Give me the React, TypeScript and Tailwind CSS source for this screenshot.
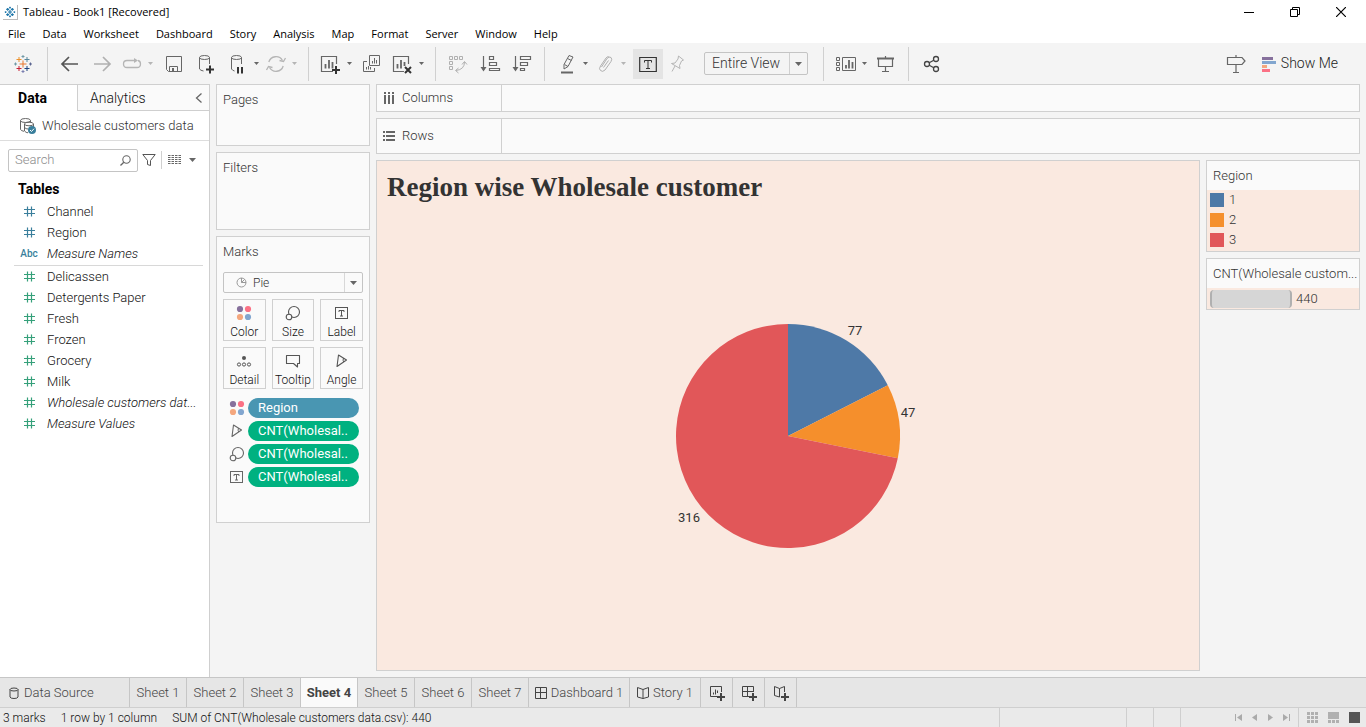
import type { ReactNode } from "react";

type IconProps = { children: ReactNode; size?: number; className?: string };

function Icon({ children, size = 24, className = "" }: IconProps) {
  return (
    <svg
      width={size}
      height={size}
      viewBox={`0 0 ${size} ${size}`}
      fill="none"
      stroke="currentColor"
      aria-hidden="true"
      className={`shrink-0 ${className}`}
    >
      {children}
    </svg>
  );
}

function Tool({ label, children, className = "text-[#666]" }: { label: string; children: ReactNode; className?: string }) {
  return (
    <button type="button" aria-label={label} className={`flex shrink-0 items-center justify-center ${className}`}>
      <Icon>{children}</Icon>
    </button>
  );
}

function Caret({ label, className = "text-[#666]" }: { label: string; className?: string }) {
  return (
    <button type="button" aria-label={label} className={`flex h-6 w-3 shrink-0 items-center justify-center ${className}`}>
      <svg width="5" height="3" viewBox="0 0 5 3" aria-hidden="true">
        <path d="M0 0H5L2.5 3Z" fill="currentColor" />
      </svg>
    </button>
  );
}

function Separator() {
  return <div className="mx-2.5 h-[34px] w-px shrink-0 bg-[#d0d0d0]" />;
}

function plus(x: number, y: number, r: number) {
  return `M${x - r} ${y}H${x + r}M${x} ${y - r}V${y + r}`;
}

function Sparkle({ mono = false }: { mono?: boolean }) {
  const c = (color: string) => (mono ? "#1f77aa" : color);
  const w = mono ? 2 : 1;
  return (
    <>
      <path d={plus(12, 12, 3.5)} stroke={c("#e8762d")} strokeWidth={w} />
      <path d={plus(8, 7.5, 2.5)} stroke={c("#eb912c")} strokeWidth={w} />
      <path d={plus(16, 7.5, 2.5)} stroke={c("#59879b")} strokeWidth={w} />
      <path d={plus(8, 16.5, 2.5)} stroke={c("#c72035")} strokeWidth={w} />
      <path d={plus(16, 16.5, 2.5)} stroke={c("#1f447e")} strokeWidth={w} />
      <path d={plus(12, 4.5, 1.5)} stroke={c("#7099a6")} strokeWidth={w} />
      <path d={plus(12, 19.5, 1.5)} stroke={c("#7b7fb0")} strokeWidth={w} />
      <path d={plus(4.5, 12, 1.5)} stroke={c("#7099a6")} strokeWidth={w} />
      <path d={plus(19.5, 12, 1.5)} stroke={c("#5b6591")} strokeWidth={w} />
    </>
  );
}

function LetterBox({ size = 14 }: { size?: number }) {
  return (
    <svg width={size} height={size} viewBox="0 0 14 14" fill="none" stroke="currentColor" aria-hidden="true" className="shrink-0">
      <rect x="0.5" y="1.5" width="12" height="11" />
      <path d="M4 6V4.5H9V6M6.5 4.5V10M5 10H8" />
    </svg>
  );
}

function ColorDots() {
  return (
    <svg width="16" height="16" viewBox="0 0 16 16" aria-hidden="true" className="shrink-0">
      <circle cx="4" cy="4" r="3.1" fill="#86709c" />
      <circle cx="12" cy="4" r="3.1" fill="#fb7185" />
      <circle cx="4" cy="12" r="3.1" fill="#f4a77e" />
      <circle cx="12" cy="12" r="3.1" fill="#82a6cf" />
    </svg>
  );
}

function SizeIcon() {
  return (
    <Icon size={16}>
      <circle cx="9" cy="7" r="5.5" strokeWidth="1.1" />
      <circle cx="4" cy="12" r="2.8" fill="#fafafa" strokeWidth="1.1" />
    </Icon>
  );
}

function AngleIcon() {
  return (
    <Icon size={16}>
      <path d="M4.5 2L12.5 7L3 13.5Z" strokeLinejoin="round" strokeWidth="1.1" />
      <path d="M9.5 5Q8.500 7.500 9.800 9" />
    </Icon>
  );
}

function DetailIcon() {
  return (
    <Icon size={16}>
      <circle cx="8" cy="5" r="2" fill="currentColor" stroke="none" />
      <circle cx="3" cy="11.5" r="1.6" />
      <circle cx="8" cy="11.5" r="1.6" />
      <circle cx="13" cy="11.5" r="1.6" />
    </Icon>
  );
}

function TooltipIcon() {
  return (
    <Icon size={16}>
      <path d="M1.5 2.5H14.5V10.5H12.5V14L8.5 10.5H1.5Z" strokeLinejoin="round" strokeWidth="1.1" />
    </Icon>
  );
}

function HashIcon({ className }: { className: string }) {
  return (
    <svg width="11" height="11" viewBox="0 0 11 11" fill="none" stroke="currentColor" strokeWidth="1.2" aria-hidden="true" className={className}>
      <path d="M3.5 0.5V10.5M7.5 0.5V10.5M0 3.5H11M0 7.5H11" />
    </svg>
  );
}

type Field = { name: string; kind: "dimension" | "text" | "measure"; italic?: boolean };

const dimensions: Field[] = [
  { name: "Channel", kind: "dimension" },
  { name: "Region", kind: "dimension" },
  { name: "Measure Names", kind: "text", italic: true },
];

const measures: Field[] = [
  { name: "Delicassen", kind: "measure" },
  { name: "Detergents Paper", kind: "measure" },
  { name: "Fresh", kind: "measure" },
  { name: "Frozen", kind: "measure" },
  { name: "Grocery", kind: "measure" },
  { name: "Milk", kind: "measure" },
  { name: "Wholesale customers dat...", kind: "measure", italic: true },
  { name: "Measure Values", kind: "measure", italic: true },
];

function FieldRow({ field }: { field: Field }) {
  return (
    <li className="flex h-[21px] items-center">
      <span className="flex w-[47px] shrink-0 justify-center pl-[11px]">
        {field.kind === "text" ? (
          <span className="text-[10px] font-medium text-[#3a7f9c]">Abc</span>
        ) : (
          <HashIcon className={field.kind === "dimension" ? "text-[#3a7f9c]" : "text-[#35a07a]"} />
        )}
      </span>
      <span className={field.italic ? "italic" : ""}>{field.name}</span>
    </li>
  );
}

function DataPane() {
  return (
    <aside className="flex w-[210px] shrink-0 flex-col border-t border-r border-[#cfcfcf] bg-white text-[#111]">
      <div className="flex h-[26px] text-sm">
        <button type="button" className="w-[77px] pr-3 text-center font-bold text-black">Data</button>
        <div className="flex flex-1 items-center justify-between border-b border-l border-[#cfcfcf] bg-[#fafafa] pr-1.5 pl-3">
          <button type="button">Analytics</button>
          <button type="button" aria-label="Collapse pane" className="text-[#666]">
            <svg width="8" height="10" viewBox="0 0 8 10" fill="none" stroke="currentColor" strokeWidth="1.3" aria-hidden="true">
              <path d="M6.5 0.5L1.5 5L6.5 9.5" />
            </svg>
          </button>
        </div>
      </div>
      <div className="flex h-[30px] items-center gap-1.5 border-b border-[#ddd] pl-5 text-[13px] text-[#333]">
        <Icon size={16} className="text-[#666]">
          <ellipse cx="5.5" cy="2.5" rx="5" ry="2" />
          <path d="M0.5 2.5V11.5Q1.5 13 4 13.3M10.5 2.5V4" />
          <ellipse cx="9" cy="6" rx="4.5" ry="1.8" />
          <path d="M4.500 6V13Q6 14.800 8 14.800M13.500 6V9M4.500 9.500Q6 11 8 11" />
          <circle cx="12" cy="12" r="4" fill="#3a7f9c" stroke="none" />
          <path d="M10 12L11.500 13.500L14 10.700" stroke="white" />
        </Icon>
        <span>Wholesale customers data</span>
      </div>
      <div className="flex h-[38px] items-center pl-2">
        <div className="flex h-[23px] w-[130px] items-center rounded-[2px] border border-[#c4c4c4] pr-1.5 pl-1.5">
          <input
            type="text"
            aria-label="Search"
            placeholder="Search"
            className="w-full min-w-0 flex-1 text-[13px] outline-none placeholder:text-[#8c8c8c]"
          />
          <Icon size={11} className="text-[#666]">
            <circle cx="6.500" cy="4.500" r="3.700" strokeWidth="1.100" />
            <path d="M3.800 7.200L0.500 10.500" strokeWidth="1.300" />
          </Icon>
        </div>
        <button type="button" aria-label="Filter fields" className="ml-1 text-[#555]">
          <Icon size={14}>
            <path d="M0.800 1.500H13.200L8.500 7.500V12.500L5.500 11.500V7.500Z" strokeLinejoin="round" />
          </Icon>
        </button>
        <div className="mr-1.5 ml-[5px] h-[18px] w-px bg-[#d0d0d0]" />
        <button type="button" aria-label="View options" className="flex items-center gap-2 text-[#666]">
          <svg width="13" height="10" viewBox="0 0 13 10" fill="none" stroke="currentColor" aria-hidden="true">
            <path d="M0 0.500H13M0 2.500H13M0 4.500H13M0 6.500H13M0 8.500H13" strokeDasharray="2.500 1" />
          </svg>
          <svg width="7" height="4" viewBox="0 0 7 4" aria-hidden="true">
            <path d="M0 0H7L3.500 4Z" fill="currentColor" />
          </svg>
        </button>
      </div>
      <h2 className="h-[22px] pl-[18px] text-[14px] leading-5 font-bold text-black">Tables</h2>
      <ul className="text-[13px]">
        {dimensions.map((f) => (
          <FieldRow key={f.name} field={f} />
        ))}
      </ul>
      <div className="mt-px mr-1.5 ml-3.5 h-px bg-[#d8d8d8]" />
      <ul className="text-[13px]">
        {measures.map((f) => (
          <FieldRow key={f.name} field={f} />
        ))}
      </ul>
    </aside>
  );
}

const markButtons: { label: string; icon: ReactNode }[] = [
  { label: "Color", icon: <ColorDots /> },
  { label: "Size", icon: <SizeIcon /> },
  { label: "Label", icon: <LetterBox /> },
  { label: "Detail", icon: <DetailIcon /> },
  { label: "Tooltip", icon: <TooltipIcon /> },
  { label: "Angle", icon: <AngleIcon /> },
];

const pills = [
  { key: "color", text: "Region", icon: <ColorDots />, tone: "bg-[#4996b2]" },
  { key: "angle", text: "CNT(Wholesal..", icon: <AngleIcon />, tone: "bg-[#00b180]" },
  { key: "size", text: "CNT(Wholesal..", icon: <SizeIcon />, tone: "bg-[#00b180]" },
  { key: "label", text: "CNT(Wholesal..", icon: <LetterBox />, tone: "bg-[#00b180]" },
];

function Cards() {
  return (
    <div className="flex w-[154px] shrink-0 flex-col gap-1.5 text-[13px] text-[#333]">
      <section className="h-[62px] border border-[#d0d0d0] bg-[#fafafa] px-1.5 py-[5px]">
        <h2 className="leading-5">Pages</h2>
      </section>
      <section className="h-[78px] border border-[#d0d0d0] bg-[#fafafa] px-1.5 py-[5px]">
        <h2 className="leading-5">Filters</h2>
      </section>
      <section className="border border-[#d0d0d0] bg-[#fafafa] px-1.5 pt-[5px] pb-[35px]">
        <h2 className="leading-5">Marks</h2>
        <div className="relative mt-2.5 flex h-[21px] items-center rounded-[2px] border border-[#c4c4c4]">
          <select
            aria-label="Mark type"
            defaultValue="Pie"
            className="h-full w-full appearance-none bg-transparent pl-[29px] text-xs outline-none"
          >
            <option>Pie</option>
            <option>Bar</option>
            <option>Line</option>
          </select>
          <div className="pointer-events-none absolute inset-y-0 left-3 flex items-center text-[#999]">
            <Icon size={11}>
              <circle cx="5.500" cy="5.500" r="4.500" />
              <path d="M5.500 1V5.500H10M5.500 5.500L8.700 2.300" />
            </Icon>
          </div>
          <div className="pointer-events-none absolute inset-y-0 right-0 flex w-[18px] items-center justify-center border-l border-[#d8d8d8] text-[#666]">
            <svg width="7" height="4" viewBox="0 0 7 4" aria-hidden="true">
              <path d="M0 0H7L3.500 4Z" fill="currentColor" />
            </svg>
          </div>
        </div>
        <div className="mt-1.5 grid grid-cols-3 gap-1.5">
          {markButtons.map((b) => (
            <button
              key={b.label}
              type="button"
              className="flex h-[42px] flex-col items-center border border-[#d0d0d0] pt-[5px] text-[#555]"
            >
              <span className="flex h-4 items-center">{b.icon}</span>
              <span className="mt-[3px] text-[12px] leading-4 whitespace-nowrap text-[#111]">{b.label}</span>
            </button>
          ))}
        </div>
        <ul className="mt-[9px] flex flex-col gap-[3px]">
          {pills.map((p) => (
            <li key={p.key} className="flex h-5 items-center pr-1 text-[#666]">
              <span className="flex w-[25px] shrink-0 items-center justify-center pl-0.5">{p.icon}</span>
              <button type="button" className={`h-5 flex-1 rounded-full pl-2.5 text-left text-[13px] leading-5 font-normal text-white ${p.tone}`}>
                {p.text}
              </button>
            </li>
          ))}
        </ul>
      </section>
    </div>
  );
}

const slices = [
  { region: "1", value: 77, color: "#4e79a7", swatch: "bg-[#4e79a7]", x: 197, y: 17 },
  { region: "2", value: 47, color: "#f58f2c", swatch: "bg-[#f58f2c]", x: 250, y: 99 },
  { region: "3", value: 316, color: "#e15759", swatch: "bg-[#e15759]", x: 31, y: 204 },
];

function PieChart() {
  const cx = 130;
  const cy = 118;
  const r = 112;
  const total = slices.reduce((sum, s) => sum + s.value, 0);
  let start = 0;
  const point = (a: number) => `${cx + r * Math.sin(a)} ${cy - r * Math.cos(a)}`;
  return (
    <svg width="260" height="236" viewBox="0 0 260 236" role="img" aria-label="Wholesale customers by region" className="overflow-visible">
      {slices.map((s) => {
        const end = start + (s.value / total) * Math.PI * 2;
        const large = end - start > Math.PI ? 1 : 0;
        const d = `M${cx} ${cy}L${point(start)}A${r} ${r} 0 ${large} 1 ${point(end)}Z`;
        start = end;
        return <path key={s.region} d={d} fill={s.color} />;
      })}
      {slices.map((s) => (
        <text key={s.region} x={s.x} y={s.y} textAnchor="middle" fill="#333" className="text-[13px] font-normal">
          {s.value}
        </text>
      ))}
    </svg>
  );
}

function Shelf({ name, icon, height }: { name: string; icon: ReactNode; height: string }) {
  return (
    <section className={`flex shrink-0 border border-[#d0d0d0] bg-[#fafafa] ${height}`}>
      <div className="flex w-[125px] items-center gap-[7px] border-r border-[#d0d0d0] pl-1.5 text-[13px] text-[#333]">
        {icon}
        <h2>{name}</h2>
      </div>
    </section>
  );
}

function Worksheet() {
  return (
    <main className="flex min-w-0 flex-1 flex-col gap-1.5 pb-1.5">
      <Shelf
        name="Columns"
        height="h-7"
        icon={
          <svg width="12" height="12" viewBox="0 0 12 12" fill="#666" aria-hidden="true">
            <path d="M1 0H3V2H1ZM5 0H7V2H5ZM9 0H11V2H9ZM1 3H3V12H1ZM5 3H7V12H5ZM9 3H11V12H9Z" />
          </svg>
        }
      />
      <Shelf
        name="Rows"
        height="h-9"
        icon={
          <svg width="12" height="12" viewBox="0 0 12 12" fill="#666" aria-hidden="true">
            <path d="M0 1H2V3H0ZM3 1H12V3H3ZM0 5H2V7H0ZM3 5H12V7H3ZM0 9H2V11H0ZM3 9H12V11H3Z" />
          </svg>
        }
      />
      <div className="flex flex-1 gap-1.5">
        <section className="flex min-w-0 flex-1 flex-col border border-[#d0d0d0] bg-[#fae9e0]">
          <h1 className="h-10 pt-2 pl-2.5 font-['Liberation_Serif',serif] text-[27px] leading-9 font-bold text-[#333]">
            Region wise Wholesale customer
          </h1>
          <div className="flex flex-1 items-center justify-center">
            <PieChart />
          </div>
        </section>
        <div className="flex w-[154px] shrink-0 flex-col gap-1.5 text-[13px] text-[#333]">
          <section className="border border-[#d0d0d0] bg-[#fae9e0]">
            <h2 className="h-[29px] bg-[#fafafa] pl-1.5 leading-[29px]">Region</h2>
            <ul className="pb-px">
              {slices.map((s) => (
                <li key={s.region} className="flex h-5 items-center gap-[5px] pl-[3px]">
                  <span className={`size-3.5 ${s.swatch}`} />
                  {s.region}
                </li>
              ))}
            </ul>
          </section>
          <section className="border border-[#d0d0d0] bg-[#fae9e0]">
            <h2 className="h-[29px] bg-[#fafafa] pl-1.5 leading-[29px] whitespace-nowrap">CNT(Wholesale custom...</h2>
            <div className="flex h-[21px] items-center gap-1 pl-[3px]">
              <span className="h-[18px] w-[82px] rounded-[4px] border-x-2 border-[#b0b0b0] bg-[#d6d6d6]" />
              <span>440</span>
            </div>
          </section>
        </div>
      </div>
    </main>
  );
}

function TitleBar() {
  return (
    <header className="flex h-6 items-center bg-white pl-[3px] text-black">
      <svg width="15" height="15" viewBox="0 0 24 24" fill="none" aria-hidden="true" className="border-r border-b border-[#bbb]">
        <Sparkle mono />
      </svg>
      <span className="pl-[5px] font-['Open_Sans',sans-serif] text-[11px] font-normal">Tableau - Book1 [Recovered]</span>
      <div className="ml-auto flex h-5 items-center gap-9 pr-5">
        <button type="button" aria-label="Minimize">
          <Icon size={10}>
            <path d="M0 5.500H10" />
          </Icon>
        </button>
        <button type="button" aria-label="Restore">
          <Icon size={10}>
            <path d="M0.500 2.500H7.500V9.500H0.500ZM2.500 2.500V0.500H9.500V7.500H7.500" />
          </Icon>
        </button>
        <button type="button" aria-label="Close">
          <Icon size={10}>
            <path d="M0 0L10 10M10 0L0 10" strokeWidth="1.200" />
          </Icon>
        </button>
      </div>
    </header>
  );
}

const menus = ["File", "Data", "Worksheet", "Dashboard", "Story", "Analysis", "Map", "Format", "Server", "Window", "Help"];

function MenuBar() {
  return (
    <nav className="flex h-[19px] items-center gap-[17px] bg-white pt-0.5 pl-2 font-['Open_Sans',sans-serif] text-[11px] font-normal text-black">
      {menus.map((m) => (
        <button key={m} type="button">
          {m}
        </button>
      ))}
    </nav>
  );
}

function Toolbar() {
  return (
    <div className="flex h-[41px] shrink-0 items-center bg-[#f4f4f4] pl-[11px]">
      <Tool label="Start page">
        <Sparkle />
      </Tool>
      <div className="ml-0.5 flex">
        <Separator />
      </div>
      <div className="flex items-center gap-2">
        <Tool label="Undo" className="text-[#555]">
          <path d="M20 12H4.500M11 5L4 12L11 19" strokeWidth="1.700" />
        </Tool>
        <Tool label="Redo" className="text-[#b0b0b0]">
          <path d="M4 12H19.500M13 5L20 12L13 19" strokeWidth="1.700" />
        </Tool>
        <div className="-ml-0.5 flex">
          <Tool label="Replay" className="text-[#b5b5b5]">
            <path d="M18 8.500Q20.500 9 20.500 12Q20.500 15.500 17 15.500H7Q3.500 15.500 3.500 12Q3.500 8.500 7 8.500H15" strokeWidth="1.300" />
            <path d="M14 6V11L18 8.500Z" fill="currentColor" stroke="none" />
          </Tool>
          <Caret label="Replay options" className="text-[#b5b5b5]" />
        </div>
        <div className="-ml-0.5 flex">
          <Tool label="Save">
            <path d="M4.500 4.500H19.500V19.500H6.500L4.500 17.500ZM7.500 19.500V14.500H15.500V19.500" />
            <path d="M10 16H12V19H10Z" fill="currentColor" stroke="none" />
          </Tool>
        </div>
        <Tool label="New data source">
          <ellipse cx="10.500" cy="5.500" rx="5" ry="2" />
          <path d="M5.500 5.500V17Q6.500 18.500 9.500 19M15.500 5.500V12" />
          <path d="M12 17.500H20M16 13.500V21.500" stroke="#333" strokeWidth="2" />
        </Tool>
        <div className="flex">
          <Tool label="Pause auto updates">
            <ellipse cx="10.500" cy="5.500" rx="5" ry="2" />
            <path d="M5.500 5.500V17Q6.500 18.500 8.500 19M15.500 5.500V12" />
            <path d="M12 15V21.500M16 15V21.500" stroke="#333" strokeWidth="2" />
          </Tool>
          <Caret label="Update options" />
        </div>
        <div className="-ml-1.5 flex">
          <Tool label="Refresh" className="text-[#b5b5b5]">
            <path d="M4.800 10A7.500 7.500 0 0 1 18.500 8.500M19.200 14A7.500 7.500 0 0 1 5.500 15.500" strokeWidth="1.300" />
            <path d="M21.500 6L19.500 9.500L15.500 8.500M2.500 18L4.500 14.500L8.500 15.500" strokeWidth="1.300" />
          </Tool>
          <Caret label="Refresh options" className="text-[#b5b5b5]" />
        </div>
      </div>
      <div className="-ml-0.5 flex">
        <Separator />
      </div>
      <div className="flex items-center">
        <Tool label="New worksheet">
          <path d="M14 19.500H2.500V4.500H17.500V12" strokeWidth="1.200" />
          <path d="M6.500 16.500V12M10 16.500V8M13.500 16.500V10" strokeWidth="1.800" />
          <path d="M13 18H21M17 14V22" stroke="#333" strokeWidth="2" />
        </Tool>
        <Caret label="New worksheet options" />
        <div className="ml-1 flex">
          <Tool label="Duplicate">
            <path d="M10.500 3.500H20.500V13.500H10.500ZM8 9.500H4.500V19.500H15.500V16" />
            <path d="M13.500 11.500V9M15.500 11.500V6M17.500 11.500V8M7.500 17.500V15M9.500 17.500V14M11.500 17.500V15" />
          </Tool>
        </div>
        <div className="ml-2 flex">
          <Tool label="Clear">
            <path d="M13 19.500H2.500V4.500H17.500V12" strokeWidth="1.200" />
            <path d="M6.500 16.500V12M10 16.500V8M13.500 14V10" strokeWidth="1.800" />
            <path d="M14 15L20 21M20 15L14 21" stroke="#333" strokeWidth="2" />
          </Tool>
          <Caret label="Clear options" />
        </div>
      </div>
      <div className="-ml-0.5 flex">
        <Separator />
      </div>
      <div className="flex items-center gap-2">
        <Tool label="Swap rows and columns" className="text-[#b0b0b0]">
          <path d="M3.500 4.500H6.500V7.500H3.500ZM8.500 4.500H11.500V7.500H8.500ZM13.500 4.500H16.500V7.500H13.500ZM3.500 9.500H6.500V12.500H3.500ZM3.500 14.500H6.500V17.500H3.500Z" />
          <path d="M18.500 10Q18.500 17.500 10 18.500M16 12.500L18.500 9.500L21 12.500M12.500 16L9.500 18.500L12.500 21" />
        </Tool>
        <Tool label="Sort ascending">
          <path d="M5.500 4V18M11.500 4.500H15.500V7.500H11.500ZM11.500 10.500H18.500V13.500H11.500ZM11.500 16.500H21.500V18.500H11.500Z" strokeWidth="1.200" />
          <path d="M2.500 15H8.500L5.500 19.500Z" fill="currentColor" stroke="none" />
        </Tool>
        <Tool label="Sort descending">
          <path d="M5.500 4V18M10.500 4.500H20.500V7.500H10.500ZM10.500 10.500H17.500V13.500H10.500ZM10.500 16.500H14.500V18.500H10.500Z" strokeWidth="1.200" />
          <path d="M2.500 15H8.500L5.500 19.500Z" fill="currentColor" stroke="none" />
        </Tool>
      </div>
      <Separator />
      <div className="flex items-center">
        <Tool label="Highlight">
          <path d="M14 3.500L18 5L13 14.500L9 17L9 12.500ZM9.500 12.500L13 14.500M12.500 6.500L16.500 8.500" />
          <path d="M6 20.500H18" strokeWidth="2" />
        </Tool>
        <Caret label="Highlight options" />
        <div className="ml-0.5 flex">
          <Tool label="Group members" className="text-[#b0b0b0]">
            <path d="M8.500 15L14 6.500Q16 4 18 5.500Q19.500 7 18 9.500L12 18Q9.500 20.500 7.500 18.500Q5.500 17 7.500 14L13 6Q14.500 4 16 5M10.500 15.500L15.500 8.500" />
          </Tool>
          <Caret label="Group options" className="text-[#b5b5b5]" />
        </div>
        <button type="button" aria-label="Show mark labels" aria-pressed="true" className="ml-1 flex size-[30px] items-center justify-center bg-[#e4e4e4] text-[#333]">
          <Icon size={18}>
            <path d="M0.700 2.500H17.300V16.500H0.700Z" strokeWidth="1.200" />
            <path d="M5.500 7.500V5.500H12.500V7.500M9 5.500V13.500M7 13.500H11" />
          </Icon>
        </button>
        <div className="ml-0.5 flex">
          <Tool label="Fix axes" className="text-[#b5b5b5]">
            <path d="M13.500 4L18.500 8L16.500 9L14.500 13.500L15 16.500L6.500 11.500L10 11L13 7ZM10 14L7 19.500" />
          </Tool>
        </div>
        <div className="relative ml-[15px] flex h-[23px] w-[104px] rounded-[2px] border border-[#c4c4c4]">
          <select aria-label="Fit" defaultValue="Entire View" className="w-full appearance-none bg-transparent pl-[7px] text-[14px] text-[#333] outline-none">
            <option>Entire View</option>
            <option>Standard</option>
            <option>Fit Width</option>
          </select>
          <div className="pointer-events-none absolute inset-y-0 right-0 flex w-[18px] items-center justify-center border-l border-[#d0d0d0] text-[#666]">
            <svg width="7" height="4" viewBox="0 0 7 4" aria-hidden="true">
              <path d="M0 0H7L3.500 4Z" fill="currentColor" />
            </svg>
          </div>
        </div>
      </div>
      <div className="ml-[5px] flex">
        <Separator />
      </div>
      <div className="flex items-center">
        <Tool label="Show or hide cards">
          <path d="M2.500 5.500H5.500V8.500H2.500ZM2.500 10.500H5.500V13.500H2.500ZM2.500 15.500H5.500V18.500H2.500ZM8.500 5.500H21.500V18.500H8.500Z" />
          <path d="M12 16.500V13M15 16.500V8M18.500 16.500V10" strokeWidth="1.800" />
        </Tool>
        <Caret label="Card options" />
        <div className="ml-1 flex">
          <Tool label="Presentation mode">
            <path d="M3 6.500H20" strokeWidth="2" />
            <path d="M4.500 6.500V14.500H18.500V6.500M11.500 4V6M11.500 14.500V19.500M8 19.500H15" strokeWidth="1.200" />
          </Tool>
        </div>
      </div>
      <Separator />
      <Tool label="Share" className="text-[#444]">
        <circle cx="8" cy="12" r="2.500" strokeWidth="1.300" />
        <circle cx="17" cy="7" r="2.500" strokeWidth="1.300" />
        <circle cx="17" cy="17" r="2.500" strokeWidth="1.300" />
        <path d="M10.200 10.800L14.800 8.200M10.200 13.200L14.800 15.800" strokeWidth="1.300" />
      </Tool>
      <div className="ml-auto flex items-center pr-7">
        <Tool label="Guide">
          <path d="M3.500 5.500H18L21 9L18 12.500H3.500ZM12 3V5.500M12 12.500V20.500M9 20.500H15" strokeWidth="1.200" />
        </Tool>
        <button type="button" className="ml-3.5 flex items-center gap-[5px] text-[14px] text-[#222]">
          <svg width="14" height="16" viewBox="0 0 14 16" aria-hidden="true">
            <path d="M0 1H11V4H0Z" fill="#86709c" />
            <path d="M0 5H14V8H0Z" fill="#82a6cf" />
            <path d="M0 9H5V12H0Z" fill="#f4a77e" />
            <path d="M0 13H8V16H0Z" fill="#fb7185" />
          </svg>
          Show Me
        </button>
      </div>
    </div>
  );
}

const sheets = ["Sheet 1", "Sheet 2", "Sheet 3", "Sheet 4", "Sheet 5", "Sheet 6", "Sheet 7"];

const addPlus = <path d="M9 13H17M13 9V17" strokeWidth="2" />;

function SheetTabs() {
  return (
    <nav className="flex h-[30px] shrink-0 border-t border-[#c6c6c6] bg-[#e6e6e6] text-[13px] text-[#444]">
      <button type="button" className="flex w-[130px] items-center gap-1 border-r border-[#c6c6c6] pl-2">
        <Icon size={12}>
          <ellipse cx="6" cy="2.500" rx="4" ry="1.500" />
          <path d="M2 2.500V10Q2.500 11.500 6 11.500Q9.500 11.500 10 10V2.500" />
        </Icon>
        Data Source
      </button>
      {sheets.map((s) => (
        <button
          key={s}
          type="button"
          className={
            s === "Sheet 4"
              ? "w-[57px] border-r border-[#c6c6c6] bg-[#fafafa] text-center font-bold whitespace-nowrap text-[#444]"
              : "w-[57px] border-r border-[#c6c6c6] text-center whitespace-nowrap"
          }
        >
          {s}
        </button>
      ))}
      <button type="button" className="flex w-[101px] items-center justify-center gap-1 border-r border-[#c6c6c6] whitespace-nowrap">
        <Icon size={12}>
          <path d="M0.500 0.500H11.500V11.500H0.500ZM5.500 0.500V11.500M0.500 5.500H11.500" />
        </Icon>
        Dashboard 1
      </button>
      <button type="button" className="flex w-[71px] items-center justify-center gap-1 border-r border-[#c6c6c6] whitespace-nowrap">
        <Icon size={12}>
          <path d="M0.500 0.500L6 2.500L11.500 0.500V10L6 11.500L0.500 10ZM6 2.500V11.500" />
        </Icon>
        Story 1
      </button>
      <button type="button" aria-label="New worksheet" className="flex w-8 items-center justify-center border-r border-[#c6c6c6]">
        <Icon size={17}>
          <path d="M9 12.500H2.500V2.500H13.500V8M5.500 10.500V8.500M7.500 10.500V5.500M9.500 9V6.500" />
          {addPlus}
        </Icon>
      </button>
      <button type="button" aria-label="New dashboard" className="flex w-8 items-center justify-center border-r border-[#c6c6c6]">
        <Icon size={17}>
          <path d="M9 12.500H2.500V2.500H13.500V8M7.500 2.500V12.500M2.500 7.500H13.500" />
          {addPlus}
        </Icon>
      </button>
      <button type="button" aria-label="New story" className="flex w-8 items-center justify-center border-r border-[#c6c6c6]">
        <Icon size={17}>
          <path d="M12.500 8V2.500L7.500 4.500L2.500 2.500V11.500L7.500 13V4.500" />
          {addPlus}
        </Icon>
      </button>
    </nav>
  );
}

function StatusBar() {
  return (
    <footer className="flex h-5 shrink-0 items-center gap-[15px] border-t border-[#cfcfcf] bg-[#eaeaea] pl-[3px] text-xs text-[#111]">
      <span>3 marks</span>
      <span>1 row by 1 column</span>
      <span>SUM of CNT(Wholesale customers data.csv): 440</span>
      <div className="ml-auto flex h-full items-center pr-1.5">
        <div className="h-full w-[127px] border-l border-[#cfcfcf]" />
        <div className="h-full w-[27px] border-l border-[#cfcfcf]" />
        <div className="h-full w-[27px] border-l border-[#cfcfcf]" />
        <div className="flex h-full items-center gap-[9px] border-l border-[#cfcfcf] pl-[54px] text-[#aaa]">
          {[
            { label: "First sheet", d: "M7 0V7L2 3.500ZM0 0H1V7H0Z" },
            { label: "Previous sheet", d: "M6 0V7L1 3.500Z" },
            { label: "Next sheet", d: "M1 0V7L6 3.500Z" },
            { label: "Last sheet", d: "M0 0V7L5 3.500ZM6 0H7V7H6Z" },
          ].map((n) => (
            <button key={n.label} type="button" aria-label={n.label}>
              <svg width="7" height="7" viewBox="0 0 7 7" aria-hidden="true">
                <path d={n.d} fill="currentColor" />
              </svg>
            </button>
          ))}
        </div>
        <div className="ml-2 flex h-full items-center gap-2.5 border-l border-[#cfcfcf] pl-2 text-[#b0b0b0]">
          <button type="button" aria-label="Show sheet sorter">
            <svg width="11" height="11" viewBox="0 0 11 11" fill="currentColor" aria-hidden="true">
              <path d="M0 0H3V3H0ZM4 0H7V3H4ZM8 0H11V3H8ZM0 4H3V7H0ZM4 4H7V7H4ZM8 4H11V7H8ZM0 8H3V11H0ZM4 8H7V11H4ZM8 8H11V11H8Z" />
            </svg>
          </button>
          <button type="button" aria-label="Show filmstrip">
            <svg width="11" height="11" viewBox="0 0 11 11" fill="currentColor" aria-hidden="true">
              <path d="M0 0H11V7H0ZM0 8H3V11H0ZM4 8H7V11H4ZM8 8H11V11H8Z" />
            </svg>
          </button>
          <button type="button" aria-label="Show tabs" className="text-[#555]">
            <svg width="11" height="11" viewBox="0 0 11 11" fill="currentColor" aria-hidden="true">
              <path d="M0 0H11V11H0Z" />
            </svg>
          </button>
        </div>
      </div>
    </footer>
  );
}

export default function App() {
  return (
    <div className="flex min-h-screen flex-col bg-[#f4f4f4] font-[Roboto,sans-serif] font-light">
      <TitleBar />
      <MenuBar />
      <Toolbar />
      <div className="flex flex-1 gap-1.5 pr-1.5">
        <DataPane />
        <Cards />
        <Worksheet />
      </div>
      <SheetTabs />
      <StatusBar />
    </div>
  );
}
